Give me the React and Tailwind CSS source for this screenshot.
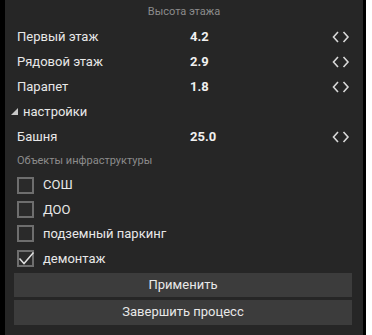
const ROWS = [
  { label: 'Первый этаж', value: '4.2' },
  { label: 'Рядовой этаж', value: '2.9' },
  { label: 'Парапет', value: '1.8' },
]

const CHECKS = [
  { label: 'СОШ', checked: false },
  { label: 'ДОО', checked: false },
  { label: 'подземный паркинг', checked: false },
  { label: 'демонтаж', checked: true },
]

function Stepper() {
  return (
    <svg width="18" height="12" viewBox="0 0 18 12" className="mr-[13px]">
      <path d="M6 1 L1.5 6 L6 11" fill="none" stroke="#d8d8d8" strokeWidth="1.6" />
      <path d="M11.5 1 L16 6 L11.5 11" fill="none" stroke="#d8d8d8" strokeWidth="1.6" />
    </svg>
  )
}

function ValueRow({ label, value }) {
  return (
    <div className="flex h-[25px] items-center pl-[12px]">
      <span className="w-[173px] text-[13px] text-[#e8e8e8]">{label}</span>
      <span className="flex-1 text-[13px] font-bold text-[#f0f0f0]">{value}</span>
      <Stepper />
    </div>
  )
}

function CheckRow({ label, checked }) {
  return (
    <div className="flex h-[24.4px] items-center pl-[12px]">
      <div className="relative h-[17px] w-[17px] border-2 border-[#6e6e6e] bg-[#2a2a2a]">
        {checked && (
          <svg width="17" height="15" viewBox="0 0 17 15" className="absolute left-[-1px] top-[-1px]">
            <path d="M1.5 7.5 L6 12.5 L15.5 1.5" fill="none" stroke="#e0e0e0" strokeWidth="1.5" />
          </svg>
        )}
      </div>
      <span className="ml-[9px] text-[13px] text-[#e8e8e8]">{label}</span>
    </div>
  )
}

export default function App() {
  return (
    <div className="flex h-[335px] w-full bg-white font-['Roboto',sans-serif]">
      <div className="w-[5px] bg-black" />
      <div className="flex w-[358px] flex-col bg-[#262626]">
        <div className="flex h-[24px] items-center justify-center text-[11px] text-[#8c8c8c]">
          Высота этажа
        </div>
        {ROWS.map((r) => (
          <ValueRow key={r.label} {...r} />
        ))}
        <div className="flex h-[25px] items-center pl-[6px]">
          <svg width="7" height="7" viewBox="0 0 7 7" className="mr-[5px]">
            <path d="M7 0 L7 7 L0 7 Z" fill="#c8c8c8" />
          </svg>
          <span className="text-[13px] text-[#e8e8e8]">настройки</span>
        </div>
        <ValueRow label="Башня" value="25.0" />
        <div className="flex h-[24px] items-center pl-[12px] text-[11px] text-[#8c8c8c]">
          Объекты инфраструктуры
        </div>
        {CHECKS.map((c) => (
          <CheckRow key={c.label} {...c} />
        ))}
        <div className="mt-[2px] flex flex-col gap-[3px] pl-[9px] pr-[11px]">
          <button className="h-[24px] bg-[#3c3c3c] text-[13px] text-[#e8e8e8]">Применить</button>
          <button className="h-[25px] bg-[#3c3c3c] text-[13px] text-[#e8e8e8]">Завершить процесс</button>
        </div>
      </div>
      <div className="w-[3px] bg-black" />
    </div>
  )
}
